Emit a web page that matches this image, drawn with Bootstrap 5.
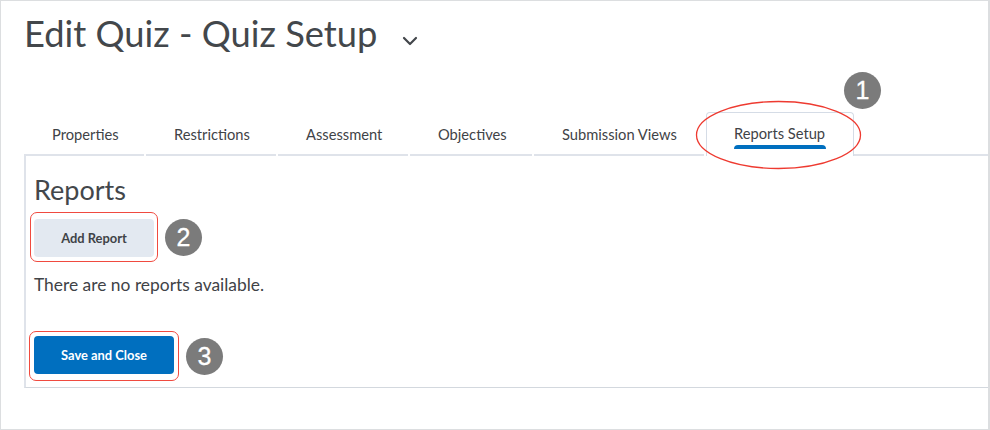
<!DOCTYPE html>
<html lang="en">
<head>
<meta charset="utf-8">
<title>Edit Quiz - Quiz Setup</title>
<link href="https://cdn.jsdelivr.net/npm/bootstrap@5.3.0/dist/css/bootstrap.min.css" rel="stylesheet">
<style>
html,body{margin:0;height:430px;overflow:hidden;background:#fff}
body{font-family:Lato,"Liberation Sans",sans-serif;color:#3f4347}
.frame{position:relative;width:990px;height:430px;border:1.5px solid #dcdee0;border-right-width:2px;padding:0 0 0 23px}
.page-title{font-size:36.3px;font-weight:400;line-height:44px;margin:0;padding-top:10px;height:72px;color:#43474b}
.chev{margin-left:25px;margin-top:35px;display:block}
.tabrow{margin-top:28px;height:55px;align-items:flex-end}
.tabitem{font-size:14.7px;color:#3f4347;padding:6px 28px 0;height:48px;line-height:40px;white-space:nowrap;border-bottom:2px solid #dfe3ea;margin-right:2px;position:relative}
.tabitem.w-a{width:120px}
.tabitem.w-b{width:130px}
.tabitem.w-c{width:130px}
.tabitem.w-d{width:122px}
.tabitem.w-e{width:170px}
.tabitem.on{width:148px;margin:0;border:1px solid #d5dce6;border-bottom:0;border-radius:4px 4px 0 0;padding:0 27px;height:44px;line-height:41px;background:#fff;z-index:1}
.tabitem.on::after{content:"";position:absolute;left:27px;right:27px;bottom:7px;height:4px;background:#006fbf;border-radius:4px 4px 0 0}
.tabfill{flex:1;border-bottom:2px solid #dfe3ea}
.panel{border:1px solid #d3d8de;border-top:0;border-right:0;border-left:2px solid #dfe3ea;height:233px;padding:0 0 0 8px;margin-top:-1px}
.panel-head{font-size:27px;font-weight:400;line-height:32px;margin:0;padding-top:19px;height:57px;color:#43474b}
.redbox{border:1.5px solid #f04a3f;border-radius:7px;margin-left:-4px;display:inline-flex}
.redbox.rb-add{padding:6px 3px 4px}
.redbox.rb-save{padding:4px 4px 6px;margin-left:-5px}
.btn.b-add,.btn.b-save{font-size:12.9px;font-weight:700;border:0;border-radius:4px;height:38px;padding:0;line-height:38px}
.btn.b-add{width:120px;background:#e3e9f1;color:#3f4347}
.btn.b-save{width:140px;background:#006fbf;color:#fff}
.num{width:37px;height:37px;border-radius:50%;background:#7b7b7b;color:#fff;font-family:"Liberation Sans",sans-serif;font-size:25px;line-height:37px;text-align:center;flex:none;-webkit-text-stroke:.3px #fff}
.empty{font-size:17.4px;line-height:20px;margin:13px 0 36px;color:#3f4347}
.ring{position:absolute;left:694px;top:99px;z-index:2;pointer-events:none}
.n1{position:absolute;left:843px;top:71px;z-index:2}
.gap-a{margin-left:7px}.gap-b{margin-left:7px}
</style>
</head>
<body>
<div class="frame">
  <div class="d-flex align-items-start">
    <h1 class="page-title">Edit Quiz - Quiz Setup</h1>
    <svg class="chev" width="16" height="10" viewBox="0 0 16 10" aria-hidden="true"><path d="M2 2l6 6 6-6" fill="none" stroke="#43474b" stroke-width="2.2" stroke-linecap="round" stroke-linejoin="round"/></svg>
  </div>
  <div class="d-flex tabrow">
    <div class="tabitem w-a">Properties</div>
    <div class="tabitem w-b">Restrictions</div>
    <div class="tabitem w-c">Assessment</div>
    <div class="tabitem w-d">Objectives</div>
    <div class="tabitem w-e">Submission Views</div>
    <div class="tabitem on">Reports Setup</div>
    <div class="tabfill"></div>
  </div>
  <div class="panel">
    <h2 class="panel-head">Reports</h2>
    <div class="d-flex align-items-center">
      <div class="redbox rb-add"><button type="button" class="btn b-add">Add Report</button></div>
      <div class="num gap-a">2</div>
    </div>
    <p class="empty">There are no reports available.</p>
    <div class="d-flex align-items-center">
      <div class="redbox rb-save"><button type="button" class="btn b-save">Save and Close</button></div>
      <div class="num gap-b">3</div>
    </div>
  </div>
  <svg class="ring" width="168" height="72" viewBox="0 0 168 72" aria-hidden="true"><ellipse cx="83.5" cy="35" rx="82" ry="33.5" fill="none" stroke="#ee3a30" stroke-width="1.3"/></svg>
  <div class="num n1">1</div>
</div>
</body>
</html>
